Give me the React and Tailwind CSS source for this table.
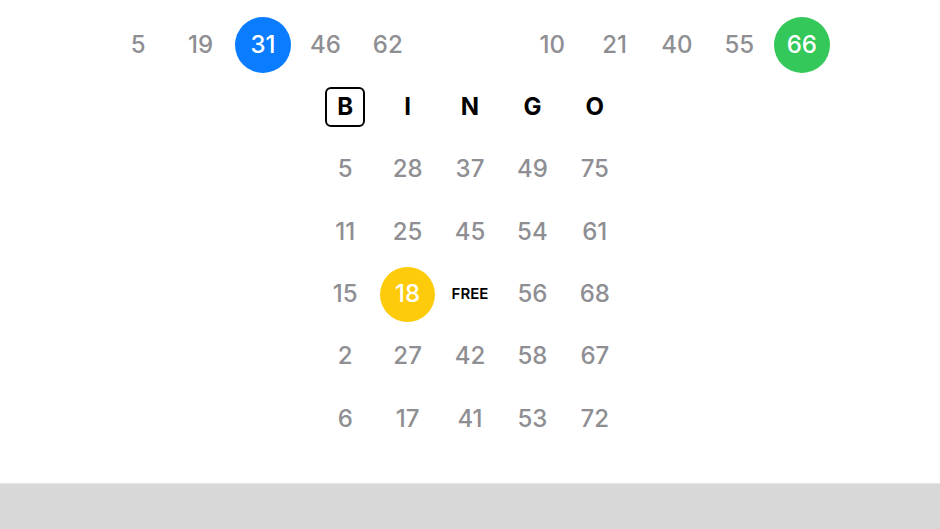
import React from "react";

const called = [
  { n: 5 },
  { n: 19 },
  { n: 31, color: "bg-[#0a7cff]" },
  { n: 46 },
  { n: 62 },
];
const calledRight = [
  { n: 10 },
  { n: 21 },
  { n: 40 },
  { n: 55 },
  { n: 66, color: "bg-[#34c759]" },
];

const card = [
  [5, 28, 37, 49, 75],
  [11, 25, 45, 54, 61],
  [15, 18, "FREE", 56, 68],
  [2, 27, 42, 58, 67],
  [6, 17, 41, 53, 72],
];

const Ball = ({ n, color }) => (
  <div className="w-[62.4px] h-[62px] flex items-center justify-center">
    {color ? (
      <div className={`w-14 h-14 rounded-full ${color} flex items-center justify-center text-white text-[24px] font-medium`}>
        {n}
      </div>
    ) : (
      <span className="text-[#8e8e93] text-[24px] font-medium">{n}</span>
    )}
  </div>
);

const Cell = ({ v }) => {
  if (v === "FREE") {
    return (
      <div className="h-[62.3px] flex items-center justify-center">
        <span className="text-black text-[15px] font-semibold">FREE</span>
      </div>
    );
  }
  if (v === 18) {
    return (
      <div className="h-[62.3px] flex items-center justify-center">
        <div className="w-[55px] h-[55px] rounded-full bg-[#fecb0b] flex items-center justify-center text-white text-[24px] font-medium">
          {v}
        </div>
      </div>
    );
  }
  return (
    <div className="h-[62.3px] flex items-center justify-center">
      <span className="text-[#8e8e93] text-[24px] font-medium">{v}</span>
    </div>
  );
};

export default function App() {
  return (
    <div
      className="w-[940px] h-[529px] bg-white overflow-hidden flex flex-col"
      style={{ fontFamily: "Inter, 'Noto Sans', sans-serif" }}
    >
      <div className="flex justify-center items-center gap-[102px] pt-[14px]">
        <div className="flex">
          {called.map((b) => (
            <Ball key={b.n} {...b} />
          ))}
        </div>
        <div className="flex">
          {calledRight.map((b) => (
            <Ball key={b.n} {...b} />
          ))}
        </div>
      </div>

      <div className="mx-auto w-[312px] grid grid-cols-5">
        {["B", "I", "N", "G", "O"].map((l, i) => (
          <div key={l} className="h-[62.3px] flex items-center justify-center">
            {i === 0 ? (
              <div className="w-10 h-10 border-2 border-black rounded-[6px] flex items-center justify-center text-[24px] font-bold text-black">
                B
              </div>
            ) : (
              <span className="text-[24px] font-bold text-black">{l}</span>
            )}
          </div>
        ))}
        {card.flat().map((v, i) => (
          <Cell key={i} v={v} />
        ))}
      </div>

      <div className="mt-auto h-[46px] bg-[#d8d8d8] border-t border-[#e6e6e6]" />
    </div>
  );
}
